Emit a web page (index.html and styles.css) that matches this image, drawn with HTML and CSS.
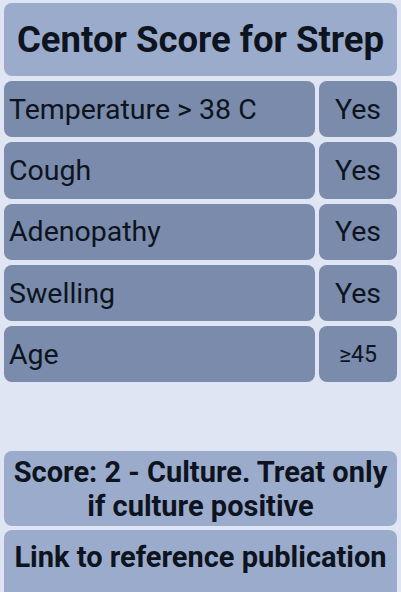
FILE: index.html
```html
<!DOCTYPE html>
<html lang="en">
<head>
    <meta charset="UTF-8">
    <meta name="viewport" content="width=device-width, initial-scale=1.0">
    <title>Centor Score for Strep</title>
    <link rel="stylesheet" href="styles.css">
</head>
<body>
    <div id="app">
        <div class="title">Centor Score for Strep</div>

        <div class="criteria">
            <div class="label">Temperature &gt; 38 C</div>
            <div class="value">Yes</div>
            <div class="label">Cough</div>
            <div class="value">Yes</div>
            <div class="label">Adenopathy</div>
            <div class="value">Yes</div>
            <div class="label">Swelling</div>
            <div class="value">Yes</div>
            <div class="label">Age</div>
            <div class="value small">≥45</div>
        </div>

        <div class="spacer"></div>

        <div class="result">Score: 2 - Culture. Treat only if culture positive</div>
        <div class="link">Link to reference publication</div>
    </div>
</body>
</html>
```

FILE: styles.css
```css
body {
    margin: 0;
    background-color: #dfe5f3;
    font-family: Roboto, 'Noto Sans', sans-serif;
    color: #0d1420;
    overflow: hidden;
}

#app {
    display: flex;
    flex-direction: column;
    padding: 3px 4px 0 4px;
    height: 592px;
    box-sizing: border-box;
}

.title {
    height: 73px;
    background-color: #9aabcb;
    border-radius: 8px;
    display: flex;
    align-items: center;
    justify-content: center;
    font-size: 36.5px;
    font-weight: bold;
    flex-shrink: 0;
}

.criteria {
    display: grid;
    grid-template-columns: 311px 78px;
    grid-auto-rows: 56.3px;
    column-gap: 4px;
    row-gap: 5px;
    margin-top: 5px;
}

.label,
.value {
    background-color: #7a8bab;
    border-radius: 8px;
    display: flex;
    align-items: center;
    font-size: 28.5px;
}

.label {
    padding-left: 5px;
}

.value {
    justify-content: center;
}

.value.small {
    font-size: 23px;
}

.spacer {
    height: 69px;
    flex-shrink: 0;
}

.result,
.link {
    background-color: #9aabcb;
    border-radius: 8px;
    display: flex;
    justify-content: center;
    text-align: center;
    font-size: 29px;
    font-weight: bold;
    line-height: 34px;
    flex-shrink: 0;
}

.result {
    height: 75px;
    padding: 0 8px;
    align-items: center;
}

.link {
    height: 75px;
    margin-top: 4px;
    padding-top: 10px;
    box-sizing: border-box;
}
```
